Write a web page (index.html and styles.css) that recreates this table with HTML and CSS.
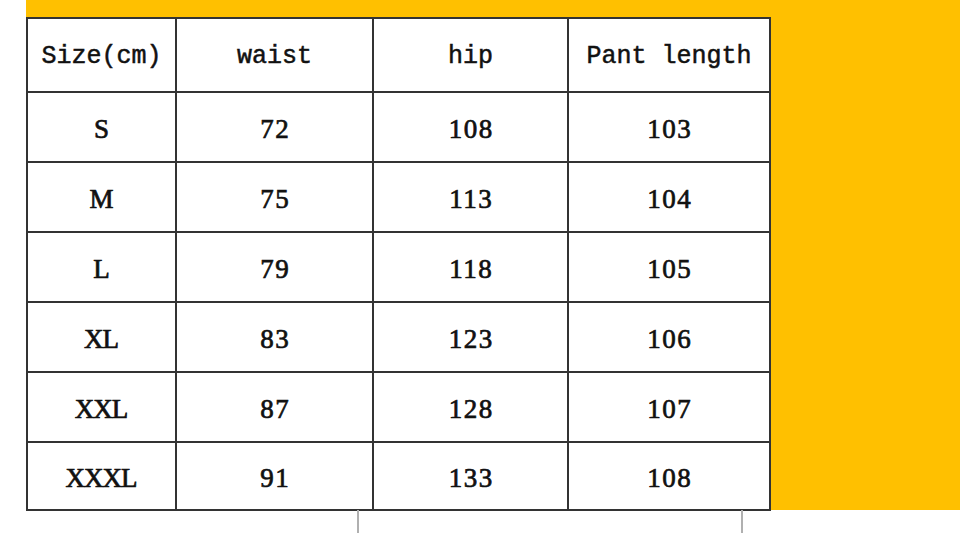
FILE: index.html
```html
<!DOCTYPE html>
<html>
<head>
<meta charset="utf-8">
<link rel="stylesheet" href="styles.css">
</head>
<body>
<div class="frame">
  <table class="sizes">
    <colgroup>
      <col class="c1"><col class="c2"><col class="c3"><col class="c4">
    </colgroup>
    <tr class="head"><th>Size(cm)</th><th>waist</th><th>hip</th><th>Pant length</th></tr>
    <tr><td class="sz">S</td><td>72</td><td>108</td><td>103</td></tr>
    <tr><td class="sz">M</td><td>75</td><td>113</td><td>104</td></tr>
    <tr><td class="sz">L</td><td>79</td><td>118</td><td>105</td></tr>
    <tr><td class="sz">XL</td><td>83</td><td>123</td><td>106</td></tr>
    <tr><td class="sz">XXL</td><td>87</td><td>128</td><td>107</td></tr>
    <tr class="last"><td class="sz">XXXL</td><td>91</td><td>133</td><td>108</td></tr>
  </table>
</div>
<div class="below">
  <span class="tick tick-a"></span>
  <span class="tick tick-b"></span>
</div>
</body>
</html>
```

FILE: styles.css
```css
html, body {
  margin: 0;
  padding: 0;
  background: #ffffff;
}
.frame {
  margin-left: 26px;
  height: 493px;
  padding-top: 17px;
  background: #ffc000;
  display: flex;
  align-items: flex-start;
}
.sizes {
  border-collapse: collapse;
  table-layout: fixed;
  width: 743px;
  background: #ffffff;
}
.c1 { width: 149px; }
.c2 { width: 197px; }
.c3 { width: 195px; }
.c4 { width: 202px; }
.sizes th, .sizes td {
  border: 2px solid #333333;
  text-align: center;
  padding: 0;
  color: #111;
}
.sizes th {
  height: 69px;
  padding-top: 3px;
  font-family: "Liberation Mono", monospace;
  font-size: 25px;
  font-weight: normal;
  -webkit-text-stroke: 0.5px #111;
}
.sizes td {
  height: 64px;
  padding-top: 4px;
  font-family: "Liberation Serif", serif;
  font-weight: normal;
  -webkit-text-stroke: 0.7px #111;
  font-size: 27px;
  letter-spacing: 1.5px;
  text-indent: 1.5px;
}
.sizes .last td {
  height: 62px;
}
.sizes td.sz {
  letter-spacing: -1px;
  text-indent: -1px;
}
.below {
  height: 23px;
  display: flex;
  padding-left: 357px;
}
.tick {
  width: 2px;
  height: 23px;
  background: #b0b0b0;
}
.tick-b {
  margin-left: 382px;
}
```
